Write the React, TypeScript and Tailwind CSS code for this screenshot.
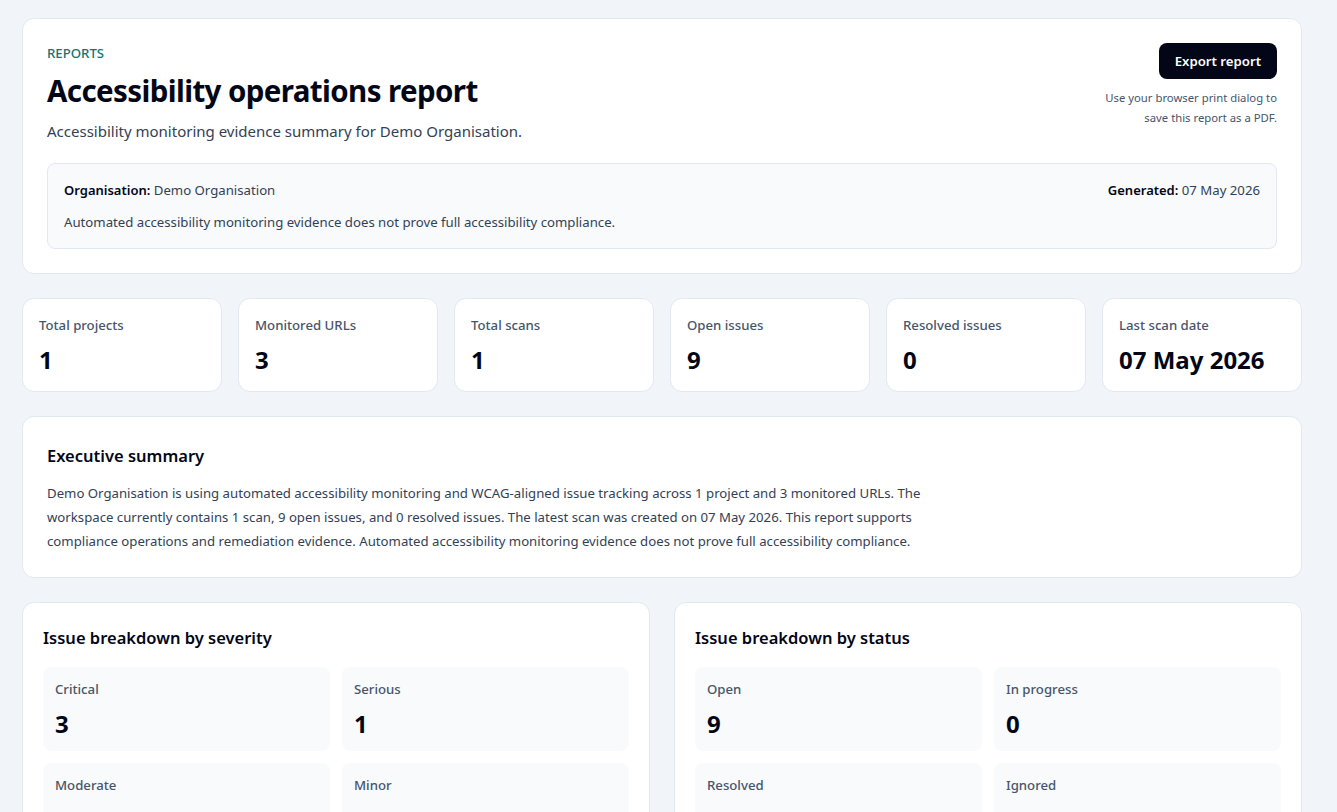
const stats = [
  { label: 'Total projects', value: '1' },
  { label: 'Monitored URLs', value: '3' },
  { label: 'Total scans', value: '1' },
  { label: 'Open issues', value: '9' },
  { label: 'Resolved issues', value: '0' },
  { label: 'Last scan date', value: '07 May 2026' },
];

const severity = [
  { label: 'Critical', value: '3' },
  { label: 'Serious', value: '1' },
  { label: 'Moderate', value: '5' },
  { label: 'Minor', value: '0' },
];

const status = [
  { label: 'Open', value: '9' },
  { label: 'In progress', value: '0' },
  { label: 'Resolved', value: '0' },
  { label: 'Ignored', value: '0' },
];

function Breakdown({ title, items }: { title: string; items: { label: string; value: string }[] }) {
  return (
    <section className="rounded-xl border border-[#e2e8f0] bg-white p-5">
      <h2 className="text-[16.5px] leading-[30px] font-semibold text-[#020617]">{title}</h2>
      <div className="mt-[14px] grid grid-cols-2 gap-3">
        {items.map((item) => (
          <div key={item.label} className="h-[84px] rounded-lg bg-[#f8fafc] px-3 pt-3">
            <p className="text-[13.2px] leading-[20px] font-medium text-[#475569]">{item.label}</p>
            <p className="mt-[9px] text-[24px] leading-[32px] font-bold text-[#020617]">{item.value}</p>
          </div>
        ))}
      </div>
    </section>
  );
}

export default function App() {
  return (
    <div className="h-[812px] overflow-hidden bg-[#f1f5f9] font-['Noto_Sans',sans-serif]">
      <div className="ml-[22px] flex w-[1280px] flex-col gap-6 pt-[18px]">
        {/* Header */}
        <section className="rounded-xl border border-[#e2e8f0] bg-white p-6">
          <div className="flex items-start justify-between">
            <div>
              <p className="text-[13.2px] leading-5 font-medium text-[#0f766e]">REPORTS</p>
              <h1 className="mt-2 text-[29.5px] leading-[40px] font-bold tracking-[-0.6px] text-[#020617]">
                Accessibility operations report
              </h1>
              <p className="mt-2 text-[15px] leading-6 text-[#334155]">
                Accessibility monitoring evidence summary for Demo Organisation.
              </p>
            </div>
            <div className="flex flex-col items-end">
              <button className="h-9 rounded-lg bg-[#020617] px-4 pt-px text-[13.2px] font-semibold text-white">
                Export report
              </button>
              <p className="mt-[9px] w-[190px] text-right text-[11.3px] leading-5 text-[#475569]">
                Use your browser print dialog to save this report as a PDF.
              </p>
            </div>
          </div>
          <div className="mt-5 rounded-lg border border-[#e2e8f0] bg-[#f8fafc] p-4 text-[13.2px] leading-5 text-[#334155]">
            <div className="flex justify-between">
              <p>
                <strong className="text-[13px] font-semibold text-[#020617]">Organisation:</strong> Demo Organisation
              </p>
              <p>
                <strong className="text-[13px] font-semibold text-[#020617]">Generated:</strong> 07 May 2026
              </p>
            </div>
            <p className="mt-3">Automated accessibility monitoring evidence does not prove full accessibility compliance.</p>
          </div>
        </section>

        {/* Stats */}
        <div className="grid grid-cols-6 gap-4">
          {stats.map((stat) => (
            <div key={stat.label} className="h-[94px] rounded-xl border border-[#e2e8f0] bg-white px-4 pt-4">
              <p className="text-[13.2px] leading-5 font-medium text-[#475569]">{stat.label}</p>
              <p className="mt-[9px] text-[24px] leading-[32px] font-bold text-[#020617]">{stat.value}</p>
            </div>
          ))}
        </div>

        {/* Summary */}
        <section className="rounded-xl border border-[#e2e8f0] bg-white p-6">
          <h2 className="text-[16.5px] leading-[30px] font-semibold text-[#020617]">Executive summary</h2>
          <p className="mt-[10px] max-w-[896px] text-[13.2px] leading-6 text-[#334155]">
            Demo Organisation is using automated accessibility monitoring and WCAG-aligned issue tracking across 1
            project and 3 monitored URLs. The workspace currently contains 1 scan, 9 open issues, and 0 resolved
            issues. The latest scan was created on 07 May 2026. This report supports compliance operations and
            remediation evidence. Automated accessibility monitoring evidence does not prove full accessibility
            compliance.
          </p>
        </section>

        {/* Breakdown */}
        <div className="grid grid-cols-2 gap-6">
          <Breakdown title="Issue breakdown by severity" items={severity} />
          <Breakdown title="Issue breakdown by status" items={status} />
        </div>
      </div>
    </div>
  );
}
